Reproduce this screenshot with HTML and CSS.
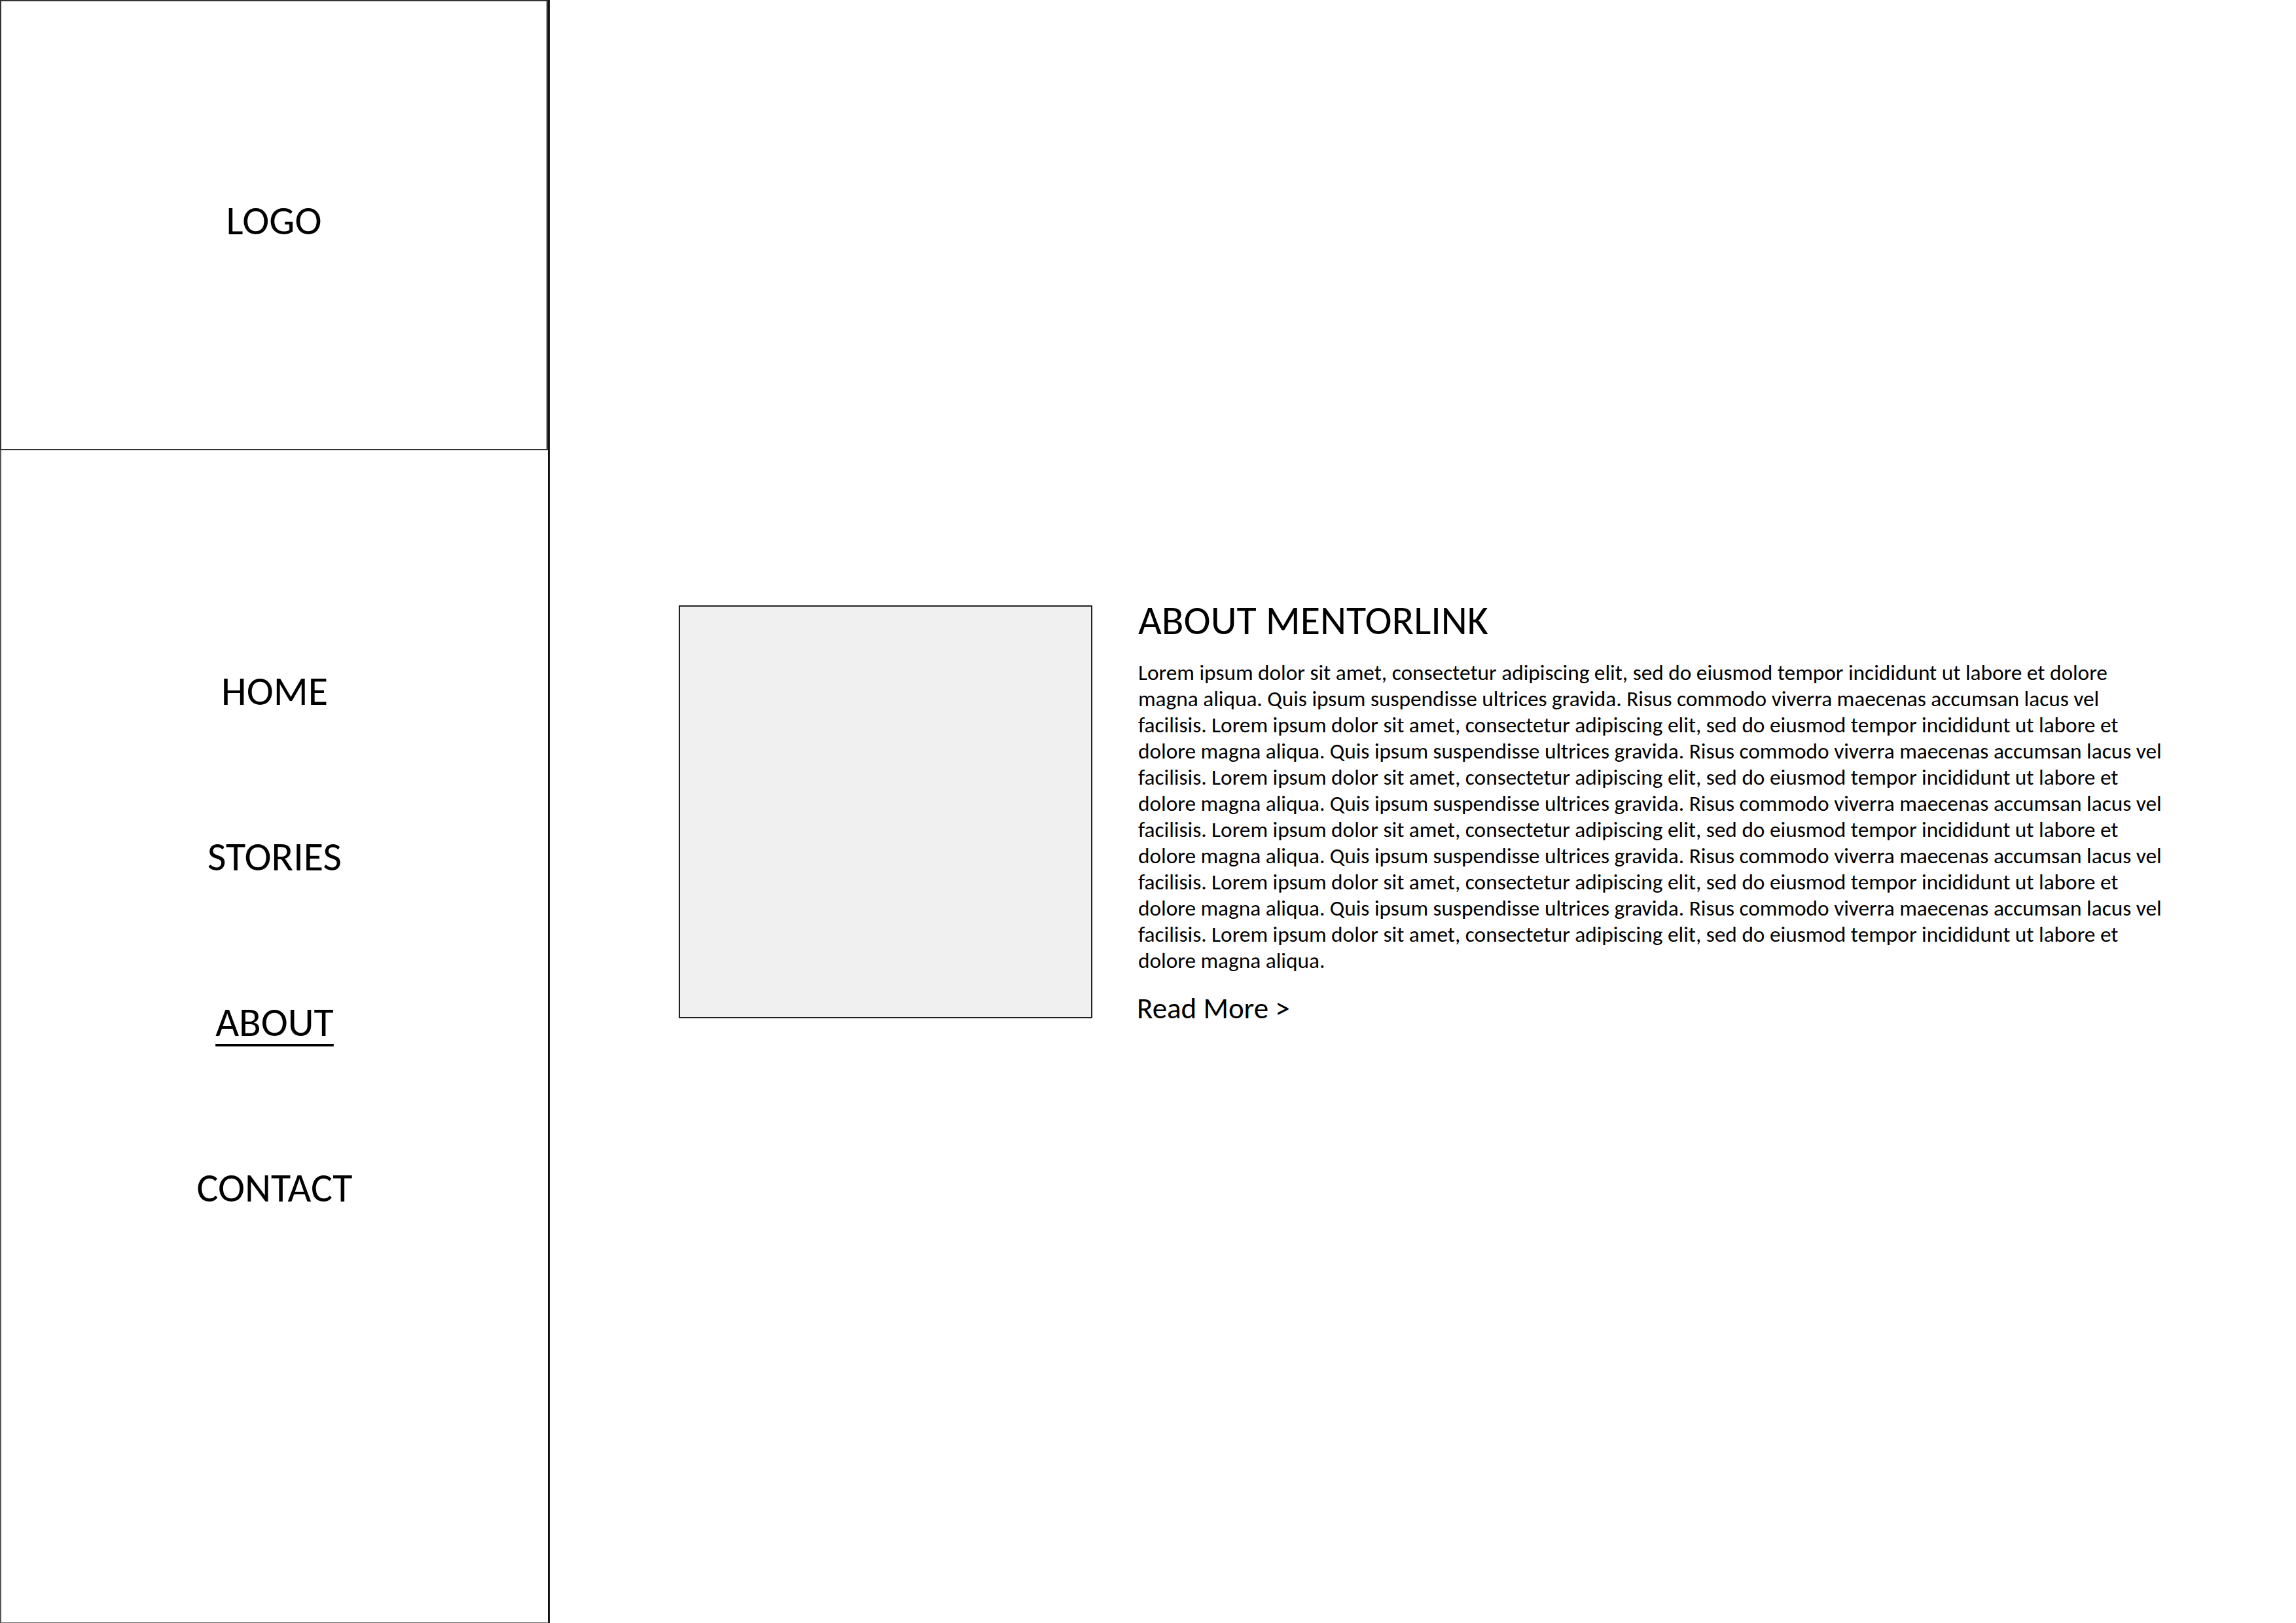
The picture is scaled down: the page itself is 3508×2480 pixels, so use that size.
FILE: index.html
```html
<!DOCTYPE html>
<html lang="en">
<head>
<meta charset="utf-8">
<title>About MentorLink</title>
<link rel="stylesheet" href="styles.css">
</head>
<body>
<div class="page">
  <aside class="sidebar">
    <div class="logo-box"><span class="logo-text">LOGO</span></div>
    <nav class="nav">
      <a class="nav-item" href="#">HOME</a>
      <a class="nav-item" href="#">STORIES</a>
      <a class="nav-item active" href="#">ABOUT</a>
      <a class="nav-item" href="#">CONTACT</a>
    </nav>
  </aside>
  <main class="main">
    <section class="about">
      <div class="about-image"></div>
      <div class="about-text">
        <h1 class="about-title">ABOUT MENTORLINK</h1>
        <p class="about-body">Lorem ipsum dolor sit amet, consectetur adipiscing elit, sed do eiusmod tempor incididunt ut labore et dolore<br>
magna aliqua. Quis ipsum suspendisse ultrices gravida. Risus commodo viverra maecenas accumsan lacus vel<br>
facilisis. Lorem ipsum dolor sit amet, consectetur adipiscing elit, sed do eiusmod tempor incididunt ut labore et<br>
dolore magna aliqua. Quis ipsum suspendisse ultrices gravida. Risus commodo viverra maecenas accumsan lacus vel<br>
facilisis. Lorem ipsum dolor sit amet, consectetur adipiscing elit, sed do eiusmod tempor incididunt ut labore et<br>
dolore magna aliqua. Quis ipsum suspendisse ultrices gravida. Risus commodo viverra maecenas accumsan lacus vel<br>
facilisis. Lorem ipsum dolor sit amet, consectetur adipiscing elit, sed do eiusmod tempor incididunt ut labore et<br>
dolore magna aliqua. Quis ipsum suspendisse ultrices gravida. Risus commodo viverra maecenas accumsan lacus vel<br>
facilisis. Lorem ipsum dolor sit amet, consectetur adipiscing elit, sed do eiusmod tempor incididunt ut labore et<br>
dolore magna aliqua. Quis ipsum suspendisse ultrices gravida. Risus commodo viverra maecenas accumsan lacus vel<br>
facilisis. Lorem ipsum dolor sit amet, consectetur adipiscing elit, sed do eiusmod tempor incididunt ut labore et<br>
dolore magna aliqua.</p>
        <a class="read-more" href="#">Read More &gt;</a>
      </div>
    </section>
  </main>
</div>
</body>
</html>
```
FILE: styles.css
```css
html, body {
  margin: 0;
  padding: 0;
  background: #ffffff;
}

body {
  font-family: Carlito, Calibri, "Open Sans", sans-serif;
  color: #000000;
}

.page {
  display: flex;
  width: 3508px;
  height: 2480px;
  overflow: hidden;
}

.sidebar {
  box-sizing: border-box;
  width: 840px;
  height: 2480px;
  flex: none;
  display: flex;
  flex-direction: column;
  border-left: 2px solid #555555;
  border-right: 3px solid #111111;
  border-bottom: 1px solid #666666;
}

.logo-box {
  box-sizing: border-box;
  width: 837px;
  height: 688px;
  margin-left: -2px;
  border: 2px solid #333333;
  display: flex;
  align-items: center;
  justify-content: center;
  padding-bottom: 14px;
}

.logo-text {
  font-size: 62px;
  line-height: 76px;
}

.nav {
  display: flex;
  flex-direction: column;
  align-items: center;
  padding-top: 330px;
  gap: 177px;
}

.nav-item {
  font-size: 62px;
  line-height: 76px;
  color: #000000;
  text-decoration: none;
}

.nav-item.active {
  text-decoration: underline;
  text-decoration-thickness: 4px;
  text-underline-offset: 12px;
}

.main {
  flex: 1;
  padding-left: 197px;
  padding-top: 910px;
}

.about {
  display: flex;
  align-items: flex-start;
  gap: 70px;
}

.about-image {
  box-sizing: border-box;
  width: 632px;
  height: 631px;
  margin-top: 15px;
  flex: none;
  background: #f0f0f0;
  border: 2px solid #222222;
}

.about-text {
  width: 1620px;
  display: flex;
  flex-direction: column;
  align-items: flex-start;
}

.about-title {
  margin: 0;
  font-size: 62px;
  font-weight: normal;
  line-height: 76px;
}

.about-body {
  margin: 22px 0 0 0;
  font-size: 33.3px;
  line-height: 40px;
  white-space: nowrap;
}

.read-more {
  margin-top: 25px;
  margin-left: -2px;
  font-size: 45px;
  line-height: 55px;
  color: #000000;
  text-decoration: none;
}
```
